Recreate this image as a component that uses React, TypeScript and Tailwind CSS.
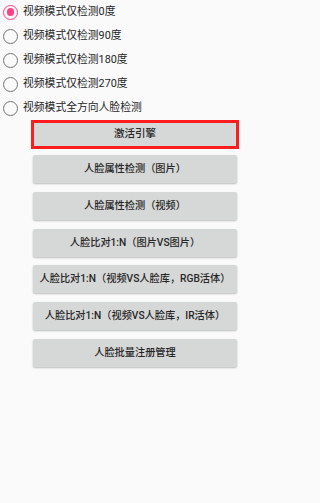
import { useState } from 'react';

const modes = [
  '视频模式仅检测0度',
  '视频模式仅检测90度',
  '视频模式仅检测180度',
  '视频模式仅检测270度',
  '视频模式全方向人脸检测',
];

const actions = [
  '人脸属性检测（图片）',
  '人脸属性检测（视频）',
  '人脸比对1:N（图片VS图片）',
  '人脸比对1:N（视频VS人脸库，RGB活体）',
  '人脸比对1:N（视频VS人脸库，IR活体）',
  '人脸批量注册管理',
];

export default function App() {
  const [mode, setMode] = useState(0);

  return (
    <div
      className="w-full min-h-screen bg-[#fafafa] text-[#262626] overflow-hidden"
      style={{ fontFamily: 'Roboto, "Noto Sans CJK SC", sans-serif' }}
    >
      {/* 检测模式 */}
      <div className="flex flex-col">
        {modes.map((m, i) => (
          <button
            key={m}
            onClick={() => setMode(i)}
            className="flex items-center h-6 pl-[3px] text-[10.8px] leading-none"
          >
            <span
              className={`flex items-center justify-center w-[15px] h-[15px] rounded-full border-[1.7px] ${
                mode === i ? 'border-[#ff4081]' : 'border-[#757575]'
              }`}
            >
              {mode === i && <span className="w-[7.5px] h-[7.5px] rounded-full bg-[#ff4081]" />}
            </span>
            <span className="ml-[5px]">{m}</span>
          </button>
        ))}
      </div>

      {/* 激活引擎 */}
      <button className="ml-[31px] w-[208px] h-[29px] border-[3px] border-[#ff1c1c] bg-[#d6d7d7] text-[10.5px] font-medium leading-none">
        激活引擎
      </button>

      {/* 功能按钮 */}
      <div className="flex flex-col mt-[2px]">
        {actions.map((a) => (
          <div key={a} className="h-[36.7px] flex items-center">
            <button className="ml-[33px] w-[204px] h-[28px] rounded-[2px] bg-[#d6d7d7] shadow-[0_1px_2px_rgba(0,0,0,0.25)] text-[10.2px] font-medium leading-none whitespace-nowrap">
              {a}
            </button>
          </div>
        ))}
      </div>
    </div>
  );
}
